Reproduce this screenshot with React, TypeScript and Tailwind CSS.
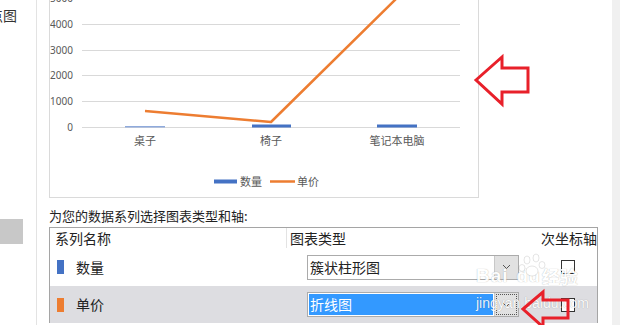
import React from "react";

const FONT = { fontFamily: '"Noto Sans CJK SC", "Noto Sans", sans-serif' };

function Chart() {
  const grid = [
    { v: "5000", y: -1.5 },
    { v: "4000", y: 24.5 },
    { v: "3000", y: 50.5 },
    { v: "2000", y: 75.5 },
    { v: "1000", y: 101.5 },
  ];
  const cats = [
    { t: "桌子", x: 145 },
    { t: "椅子", x: 271 },
    { t: "笔记本电脑", x: 397 },
  ];
  return (
    <svg width="428" height="197" viewBox="50 0 428 197" className="block">
      {grid.map((g) => (
        <g key={g.v}>
          <line x1="82" x2="460" y1={g.y} y2={g.y} stroke="#d9d9d9" strokeWidth="1" />
          <text x="73" y={g.y + 3.5} textAnchor="end" fontSize="10" fill="#595959" fontFamily='"Noto Sans", sans-serif'>
            {g.v}
          </text>
        </g>
      ))}
      <text x="73" y="131" textAnchor="end" fontSize="10" fill="#595959" fontFamily='"Noto Sans", sans-serif'>
        0
      </text>
      <line x1="82" x2="460" y1="127.5" y2="127.5" stroke="#d9d9d9" strokeWidth="1" />
      <rect x="125" y="126" width="40" height="1.5" fill="#8faadc" />
      <rect x="252" y="124.5" width="39" height="3" fill="#4472c4" />
      <rect x="377" y="124.5" width="40" height="3" fill="#4472c4" />
      <polyline points="145,111 271,122 399,-4" fill="none" stroke="#ed7d31" strokeWidth="2.5" strokeLinejoin="round" />
      {cats.map((c) => (
        <text key={c.t} x={c.x} y="145" textAnchor="middle" fontSize="11" fill="#595959" fontFamily='"Noto Sans CJK SC", sans-serif'>
          {c.t}
        </text>
      ))}
      <rect x="214" y="179.5" width="23" height="4" fill="#4472c4" />
      <text x="240" y="185.5" fontSize="11" fill="#595959" fontFamily='"Noto Sans CJK SC", sans-serif'>数量</text>
      <line x1="270" x2="295" y1="181.5" y2="181.5" stroke="#ed7d31" strokeWidth="2.5" />
      <text x="297" y="185.5" fontSize="11" fill="#595959" fontFamily='"Noto Sans CJK SC", sans-serif'>单价</text>
    </svg>
  );
}

function Chevron() {
  return (
    <svg width="9" height="6" viewBox="0 0 9 6">
      <polyline points="1,1 4.5,4.5 8,1" fill="none" stroke="#555" strokeWidth="1" />
    </svg>
  );
}

export default function App() {
  return (
    <div className="relative w-[620px] h-[325px] overflow-hidden bg-white flex text-[#222]" style={FONT}>
      {/* left panel */}
      <div className="w-[37px] shrink-0 border-r border-[#e3e3e3] flex flex-col overflow-hidden">
        <div className="mt-[6px] ml-[-25px] text-[14px] leading-[18px] text-[#333] whitespace-nowrap">散点图</div>
        <div className="mt-[195px] w-[23px] h-[25px] bg-[#c8c8c8]" />
      </div>

      {/* main */}
      <div className="flex-1 pl-[12px] pr-[14px] flex flex-col">
        <div className="w-[430px] h-[198px] border-l border-r border-b border-[#dadada]">
          <Chart />
        </div>
        <div className="mt-[9px] text-[13px] leading-[18px] whitespace-nowrap">为您的数据系列选择图表类型和轴:</div>
        <div className="mt-[2px] border-l border-t border-r border-[#a5a5a5] flex flex-col">
          {/* header */}
          <div className="flex h-[20px] text-[14px] leading-[20px]">
            <div className="w-[236px] pl-[5px]">系列名称</div>
            <div className="w-[252px] border-l border-[#e3e3e3] pl-[3px]">图表类型</div>
            <div className="flex-1 pl-[3px] whitespace-nowrap">次坐标轴</div>
          </div>
          {/* row 1 */}
          <div className="flex h-[38px] items-center">
            <div className="w-[236px] flex items-center pl-[7px]">
              <div className="w-[7px] h-[14px] bg-[#4472c4]" />
              <span className="ml-[12px] text-[14px]">数量</span>
            </div>
            <div className="w-[252px] pl-[21px]">
              <div className="w-[212px] h-[25px] border border-[#ababab] bg-white flex">
                <div className="flex-1 pl-[2px] text-[14px] leading-[23px]">簇状柱形图</div>
                <div className="w-[24px] bg-[#e1e1e1] border-l border-[#c8c8c8] flex items-center justify-center">
                  <Chevron />
                </div>
              </div>
            </div>
            <div className="flex-1 flex justify-center">
              <div className="w-[14px] h-[14px] border border-[#333] bg-white" />
            </div>
          </div>
          {/* row 2 */}
          <div className="flex h-[37px] items-center bg-[#dddde1]">
            <div className="w-[236px] flex items-center pl-[7px]">
              <div className="w-[7px] h-[14px] bg-[#ed7d31]" />
              <span className="ml-[12px] text-[14px]">单价</span>
            </div>
            <div className="w-[252px] pl-[21px]">
              <div className="w-[212px] h-[25px] border border-[#ababab] bg-white flex">
                <div className="flex-1 m-[1px] bg-[#3399ff] pl-[1px] text-[14px] leading-[21px] text-white">折线图</div>
                <div className="w-[24px] bg-[#e1e1e1] border-l border-[#c8c8c8] flex items-center justify-center p-[1px]">
                  <div className="w-full h-full border border-dotted border-[#555] flex items-center justify-center">
                    <Chevron />
                  </div>
                </div>
              </div>
            </div>
            <div className="flex-1 flex justify-center">
              <div className="w-[14px] h-[14px] border border-[#333] bg-white" />
            </div>
          </div>
        </div>
      </div>

      {/* scrollbar strip */}
      <div className="w-[8px] shrink-0 bg-[#f0f0f0]" />

      {/* watermark */}
      <div className="absolute left-[476px] top-[266px] flex items-end pointer-events-none text-white opacity-90 [text-shadow:0_0_1px_rgba(0,0,0,0.35)]">
        <span className="text-[19px] font-bold leading-[20px] tracking-[1px]" style={{ fontFamily: '"Liberation Sans", sans-serif' }}>Bai</span>
        <span className="text-[19px] font-bold leading-[20px] ml-[8px]" style={{ fontFamily: '"Liberation Sans", sans-serif' }}>du</span>
        <span className="text-[18px] font-bold leading-[20px] ml-[2px]">经验</span>
      </div>
      <div className="absolute left-[476px] top-[295px] pointer-events-none text-white text-[14px] leading-[16px] opacity-90 [text-shadow:0_0_1px_rgba(0,0,0,0.35)]" style={{ fontFamily: '"Liberation Sans", sans-serif' }}>
        jingyan.baidu.com
      </div>

      {/* overlay arrows + paw */}
      <svg className="absolute left-0 top-0 pointer-events-none" width="620" height="325" viewBox="0 0 620 325">
        <g fill="white" stroke="rgba(0,0,0,0.18)" strokeWidth="0.6">
          <ellipse cx="527" cy="260" rx="3" ry="4" />
          <ellipse cx="536" cy="258" rx="3" ry="4" />
          <ellipse cx="522" cy="268" rx="3" ry="3.5" />
          <ellipse cx="542" cy="265" rx="3" ry="3.5" />
          <ellipse cx="532" cy="271" rx="6" ry="5" />
        </g>
        <polygon
          points="476,80 502,57 502,68 528,68 528,92 502,92 502,104"
          fill="none"
          stroke="#e8202a"
          strokeWidth="3"
          strokeLinejoin="miter"
        />
        <polygon
          points="523,309 543,292 543,300 568,300 568,318 543,318 543,327"
          fill="none"
          stroke="#e8202a"
          strokeWidth="3"
          strokeLinejoin="miter"
        />
      </svg>
    </div>
  );
}
